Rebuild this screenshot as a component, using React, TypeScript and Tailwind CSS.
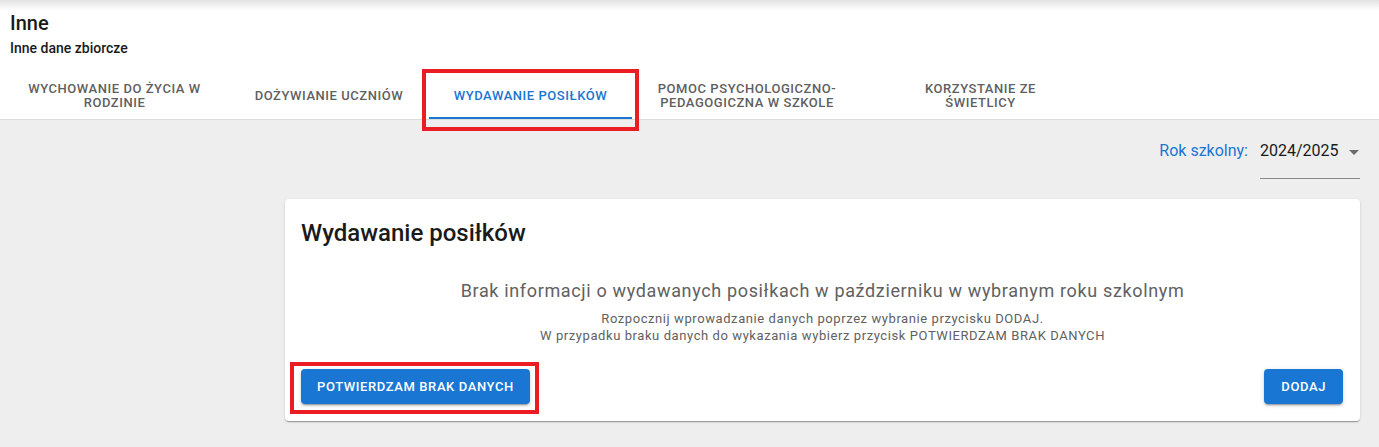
import React from 'react'

const tabs = [
  { label: 'Wychowanie do życia w rodzinie', width: 'w-[229px]' },
  { label: 'Dożywianie uczniów', width: 'w-[200px]' },
  { label: 'Wydawanie posiłków', width: 'w-[203px]', active: true },
  { label: 'Pomoc psychologiczno-pedagogiczna w szkole', width: 'w-[230px]' },
  { label: 'Korzystanie ze świetlicy', width: 'w-[237px]' },
]

const btn =
  'h-[35px] rounded bg-[#1976d2] text-[13px] font-medium uppercase tracking-[0.6px] text-white shadow-[0_3px_1px_-2px_rgba(0,0,0,0.2),0_2px_2px_0_rgba(0,0,0,0.14),0_1px_5px_0_rgba(0,0,0,0.12)]'

function Tab({ label, width, active }: { label: string; width: string; active?: boolean }) {
  return (
    <div className={`relative flex h-[47px] shrink-0 items-center justify-center ${width}`}>
      <span
        className={`max-w-[182px] text-center text-[13px] font-medium uppercase leading-[14px] tracking-[0.55px] ${
          active ? 'text-[#1976d2]' : 'text-[#5f5f5f]'
        }`}
      >
        {label}
      </span>
      {active && (
        <>
          <div className="absolute bottom-0 left-0 right-0 h-[2px] bg-[#1976d2]" />
          <div className="absolute -left-[7px] -right-[7px] -top-[3px] -bottom-[12px] z-10 border-4 border-[#ec1c24]" />
        </>
      )}
    </div>
  )
}

export default function App() {
  return (
    <div className="h-[447px] w-full overflow-hidden bg-[#eeeeee] font-['Roboto',sans-serif]">
      <header className="border-b border-[#dcdcdc] bg-[linear-gradient(to_bottom,#e2e2e2_0px,#ffffff_10px)]">
        <div className="px-[10px] pt-[11px]">
          <h1 className="text-[20px] font-medium leading-[24px] text-[#1a1a1a]">Inne</h1>
          <p className="mt-[3px] text-[14px] font-medium leading-[20px] text-[#1a1a1a]">Inne dane zbiorcze</p>
        </div>
        <nav className="mt-[14px] flex">
          {tabs.map((t) => (
            <Tab key={t.label} {...t} />
          ))}
        </nav>
      </header>

      <main className="pr-[19px]">
        <div className="mt-[19px] flex justify-end">
          <span className="text-[16px] leading-[24px] text-[#1976d2]">Rok szkolny:</span>
          <div className="ml-[12px] flex h-[40px] w-[100px] items-start justify-between border-b border-[#8a8a8a]">
            <span className="text-[16px] leading-[24px] text-[#1a1a1a]">2024/2025</span>
            <svg width="10" height="5" viewBox="0 0 10 5" className="mr-[1px] mt-[11px]">
              <path d="M0 0h10L5 5z" fill="#6b6b6b" />
            </svg>
          </div>
        </div>

        <section className="ml-[285px] mt-[20px] rounded bg-white px-4 pb-[17px] pt-[18px] shadow-[0_2px_1px_-1px_rgba(0,0,0,0.2),0_1px_1px_0_rgba(0,0,0,0.14),0_1px_3px_0_rgba(0,0,0,0.12)]">
          <h2 className="text-[24px] font-medium leading-[32px] text-[#1a1a1a]">Wydawanie posiłków</h2>

          <div className="mt-[29px] text-center text-[#616161]">
            <p className="text-[18px] leading-[26px] tracking-[0.65px]">
              Brak informacji o wydawanych posiłkach w październiku w wybranym roku szkolnym
            </p>
            <p className="mt-[6px] text-[13px] leading-[17px] tracking-[0.58px]">
              Rozpocznij wprowadzanie danych poprzez wybranie przycisku DODAJ.
              <br />
              W przypadku braku danych do wykazania wybierz przycisk POTWIERDZAM BRAK DANYCH
            </p>
          </div>

          <div className="mt-[25px] flex items-center justify-between">
            <div className="relative">
              <button className={`${btn} px-[16px]`}>Potwierdzam brak danych</button>
              <div className="absolute -bottom-[10px] -left-[11px] -right-[9px] -top-[7px] border-4 border-[#ec1c24]" />
            </div>
            <button className={`${btn} mr-px px-[17px]`}>Dodaj</button>
          </div>
        </section>
      </main>
    </div>
  )
}
